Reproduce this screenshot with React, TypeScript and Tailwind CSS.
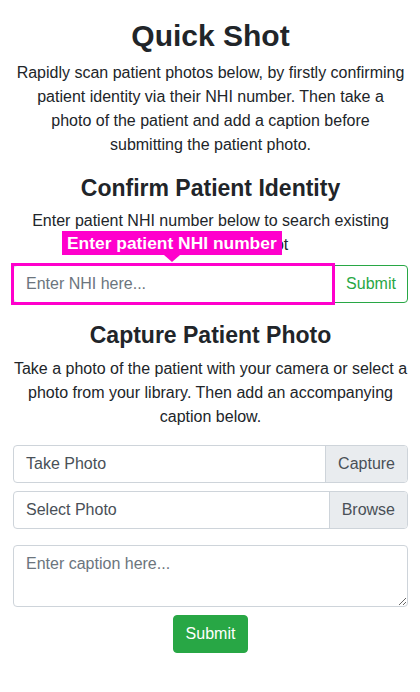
import React from "react";

const App = () => {
  return (
    <main className="min-h-screen bg-white pl-[13px] pr-[12px] pt-[18px] text-center font-['Liberation_Sans',Arial,sans-serif] text-[#212529]">
      {/* Heading */}
      <h1 className="mb-[7px] text-[30px] font-bold leading-[36px]">Quick Shot</h1>
      <p className="mb-[17px] text-base leading-6">
        Rapidly scan patient photos below, by firstly confirming
        <br />
        patient identity via their NHI number. Then take a
        <br />
        photo of the patient and add a caption before
        <br />
        submitting the patient photo.
      </p>

      {/* NHI lookup */}
      <h2 className="mb-[7px] text-[23px] font-bold leading-[28px]">Confirm Patient Identity</h2>
      <p className="mb-2 text-base leading-6">
        Enter patient NHI number below to search existing patients in Quick Shot
      </p>
      <div className="relative mb-[18px] flex h-[38px]">
        <input
          type="text"
          placeholder="Enter NHI here..."
          className="h-[38px] min-w-0 flex-1 rounded-l border border-[#ced4da] px-3 text-base text-[#495057] outline-none placeholder:text-[#6c757d]"
        />
        <button className="-ml-px h-[38px] w-[74px] rounded-r border border-[#28a745] bg-white text-base text-[#28a745]">
          Submit
        </button>
        {/* highlight box + tooltip */}
        <div className="pointer-events-none absolute left-[-2px] top-[-2px] h-[42px] w-[324px] border-[3px] border-[#ff00cc]" />
        <div className="absolute left-[49px] top-[-34px] h-[24px] whitespace-nowrap bg-[#ff00cc] px-[5px] text-[17.4px] font-bold leading-[24px] text-white">
          Enter patient NHI number
        </div>
        <div className="absolute left-[151px] top-[-10px] h-0 w-0 border-x-[8px] border-t-[7px] border-x-transparent border-t-[#ff00cc]" />
      </div>

      {/* Photo capture */}
      <h2 className="mb-2 text-[23px] font-bold leading-[28px]">Capture Patient Photo</h2>
      <p className="mb-4 text-base leading-6">
        Take a photo of the patient with your camera or select a photo from your library. Then add an accompanying
        caption below.
      </p>

      <div className="mb-2 flex h-[38px] overflow-hidden rounded border border-[#ced4da] text-base text-[#495057]">
        <span className="flex-1 px-3 text-left leading-[36px]">Take Photo</span>
        <span className="border-l border-[#ced4da] bg-[#e9ecef] px-3 leading-[36px]">Capture</span>
      </div>
      <div className="mb-4 flex h-[38px] overflow-hidden rounded border border-[#ced4da] text-base text-[#495057]">
        <span className="flex-1 px-3 text-left leading-[36px]">Select Photo</span>
        <span className="border-l border-[#ced4da] bg-[#e9ecef] px-3 leading-[36px]">Browse</span>
      </div>

      <textarea
        placeholder="Enter caption here..."
        className="mb-2 block h-[62px] w-full resize-y rounded border border-[#ced4da] px-3 py-1.5 text-base leading-6 text-[#495057] outline-none placeholder:text-[#6c757d]"
      />

      <button className="mx-auto block h-[38px] rounded border border-[#28a745] bg-[#28a745] px-3 text-base leading-6 text-white">
        Submit
      </button>
    </main>
  );
};

export default App;
